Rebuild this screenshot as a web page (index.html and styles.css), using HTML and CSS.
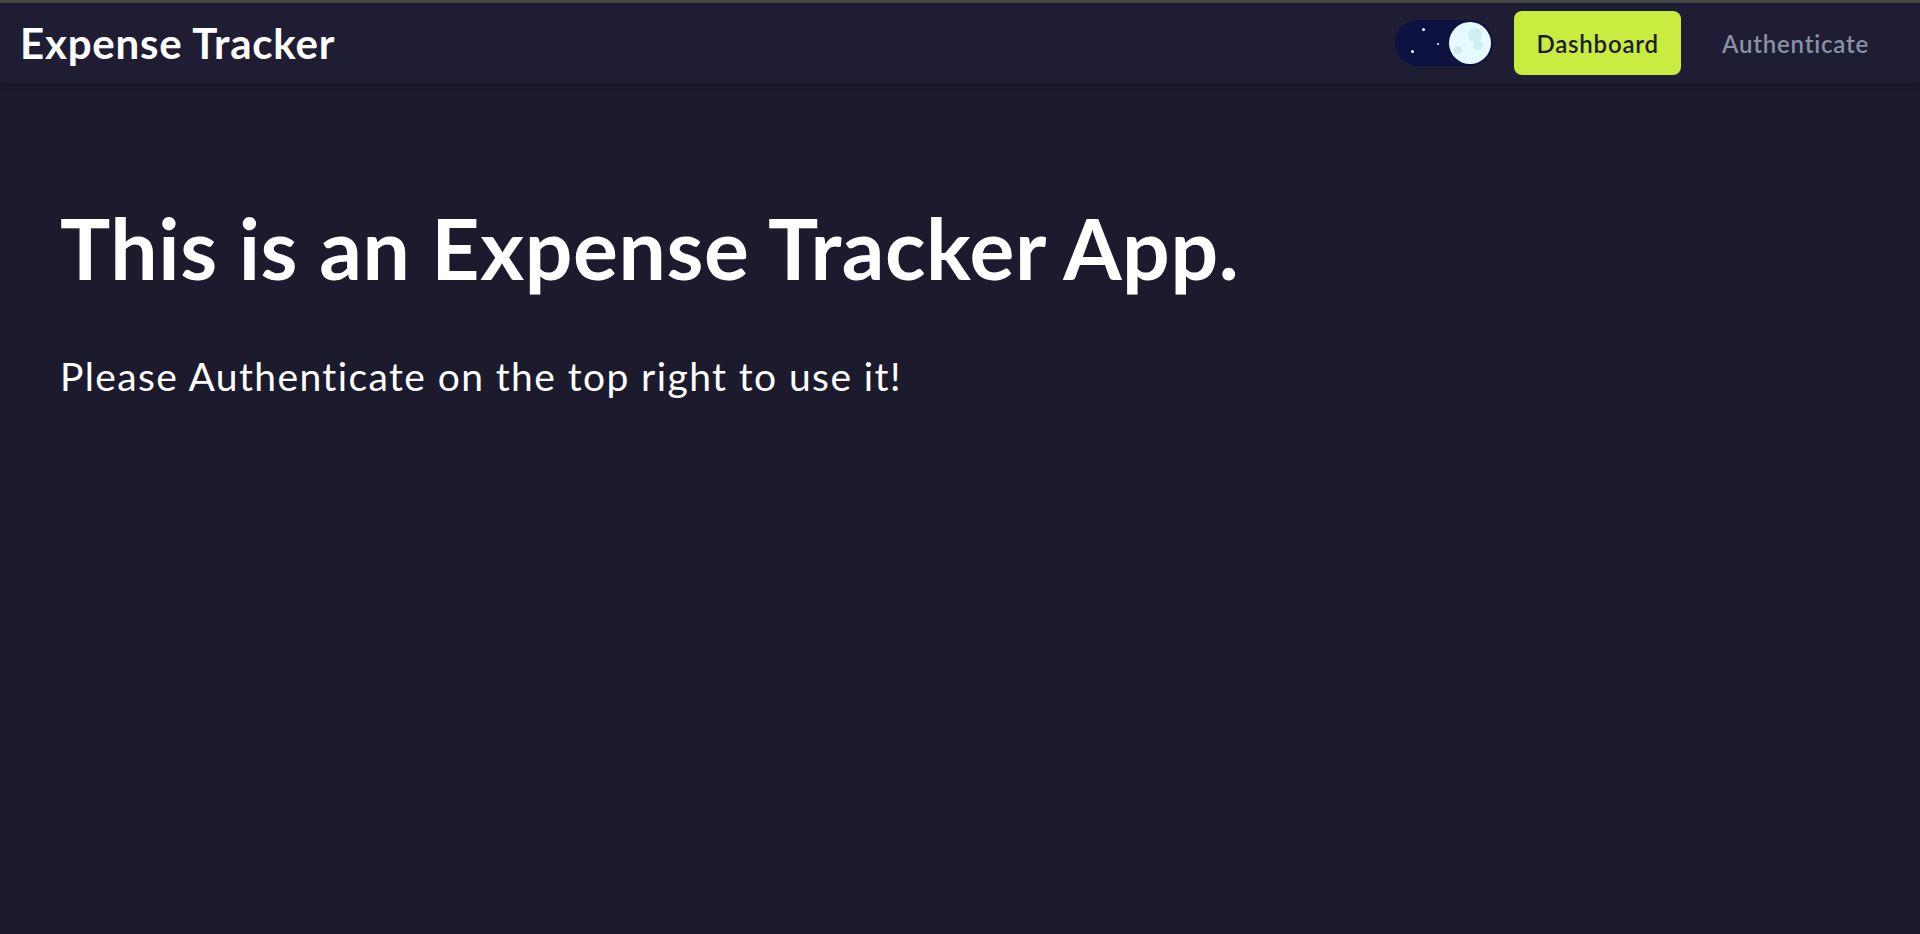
FILE: index.html
```html
<!DOCTYPE html>
<html lang="en">
<head>
<meta charset="utf-8">
<title>Expense Tracker</title>
<link rel="stylesheet" href="styles.css">
</head>
<body>
<header class="navbar">
  <div class="brand">Expense Tracker</div>
  <nav class="nav-right">
    <div class="theme-toggle" aria-label="Toggle theme">
      <span class="star star-1"></span>
      <span class="star star-2"></span>
      <span class="star star-3"></span>
      <span class="moon">
        <span class="crater crater-1"></span>
        <span class="crater crater-2"></span>
        <span class="crater crater-3"></span>
      </span>
    </div>
    <a class="nav-btn nav-btn-active" href="#">Dashboard</a>
    <a class="nav-btn" href="#">Authenticate</a>
  </nav>
</header>
<main class="hero">
  <h1 class="hero-title">This is an Expense Tracker App.</h1>
  <p class="hero-text">Please Authenticate on the top right to use it!</p>
</main>
</body>
</html>
```
FILE: styles.css
```css
* { box-sizing: border-box; }
html, body { height: 100%; }
body {
  margin: 0;
  background: #1c1b2e;
  color: #ffffff;
  font-family: Lato, "Open Sans", sans-serif;
  font-variant-ligatures: none;
  border-top: 3px solid #474747;
}
.navbar {
  height: 80px;
  background: #1f1d33;
  display: flex;
  align-items: center;
  justify-content: space-between;
  padding: 0 29px 0 20px;
  box-shadow: 0 2px 6px rgba(0,0,0,0.25);
}
.brand {
  font-size: 42px;
  font-weight: 700;
  letter-spacing: 0.8px;
}
.nav-right {
  display: flex;
  align-items: center;
  gap: 19px;
}
.theme-toggle {
  position: relative;
  width: 98px;
  height: 46px;
  border-radius: 23px;
  background: #0e1240;
  margin-right: 2px;
}
.star {
  position: absolute;
  width: 3px;
  height: 3px;
  border-radius: 50%;
  background: #ffffff;
}
.star-1 { left: 27px; top: 8px; }
.star-2 { left: 42px; top: 23px; width: 2px; height: 2px; }
.star-3 { left: 16px; top: 30px; }
.moon {
  position: absolute;
  right: 2px;
  top: 2px;
  width: 42px;
  height: 42px;
  border-radius: 50%;
  background: #e6fbff;
}
.crater {
  position: absolute;
  border-radius: 50%;
  background: #cfeef2;
}
.crater-1 { width: 14px; height: 14px; left: 19px; top: 6px; }
.crater-2 { width: 10px; height: 10px; left: 24px; top: 18px; }
.crater-3 { width: 8px; height: 8px; left: 5px; top: 24px; }
.nav-btn {
  display: flex;
  align-items: center;
  height: 64px;
  padding: 0 22px;
  border-radius: 8px;
  font-size: 24px;
  font-weight: 600;
  letter-spacing: 0.8px;
  color: #8891a7;
  text-decoration: none;
}
.nav-btn-active {
  background: #c9ec41;
  color: #1e1d2f;
}
.hero {
  padding: 115px 60px 0;
}
.hero-title {
  margin: 0;
  font-size: 84px;
  font-weight: 700;
  line-height: 1.2;
  letter-spacing: 0.6px;
}
.hero-text {
  margin: 54px 0 0;
  font-size: 39px;
  font-weight: 400;
  letter-spacing: 1.4px;
}
```
